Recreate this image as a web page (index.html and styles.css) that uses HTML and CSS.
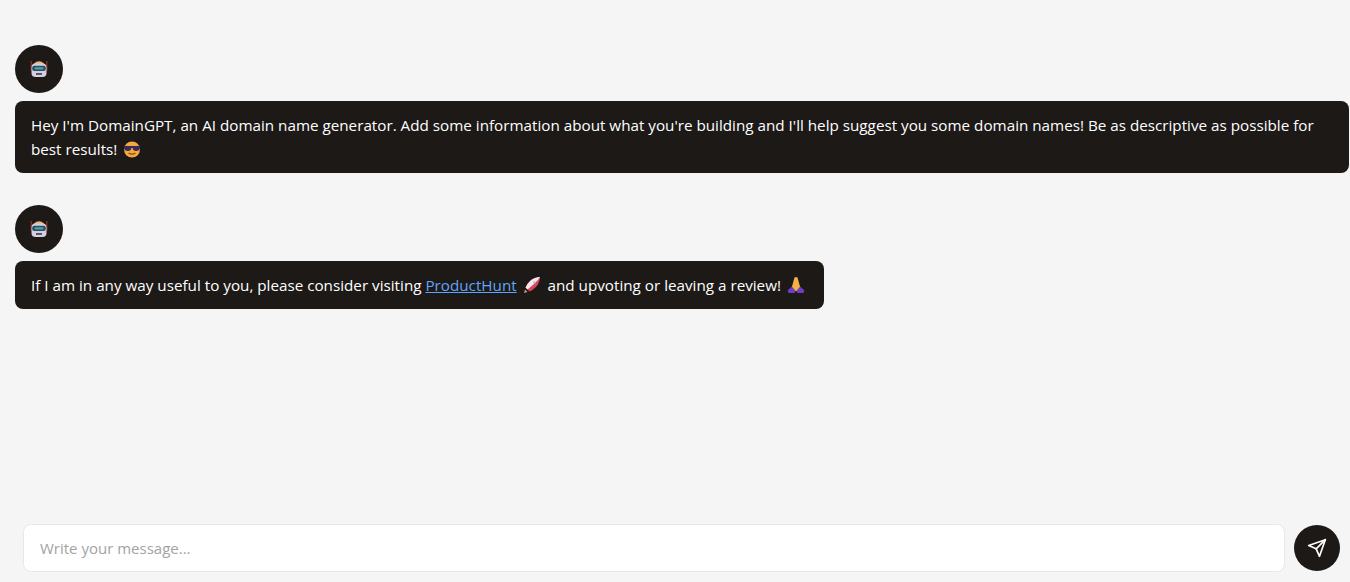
FILE: index.html
```html
<!DOCTYPE html>
<html lang="en">
  <head>
    <meta charset="UTF-8" />
    <meta name="viewport" content="width=device-width, initial-scale=1.0" />
    <title>DomainGPT</title>
    <link rel="stylesheet" href="styles.css">
  </head>
  <body>
    <main class="chat">
      <div class="message">
        <div class="avatar">
          <svg class="robot" viewBox="0 0 18 18" width="18" height="18" aria-hidden="true">
            <path d="M0.5 1 L2 1 L2.5 11 L0.5 11 Z M16 1 L17.5 1 L17.5 11 L15.5 11 Z" fill="#7a2c22" />
            <path d="M4 3.5 Q9 -1 14 3.5 L14 5 L4 5 Z" fill="#f0b27a" />
            <rect x="1.5" y="3.5" width="15" height="13.5" rx="4" fill="#d6cede" />
            <rect x="2.2" y="5.8" width="13.6" height="5.2" rx="2.2" fill="#27505f" />
            <rect x="4.5" y="7.2" width="9" height="2.2" rx="1" fill="#4f9fb2" />
            <rect x="6" y="13.2" width="6" height="1.5" fill="#33303a" />
          </svg>
        </div>
        <div class="bubble">
          Hey I'm DomainGPT, an AI domain name generator. Add some information about what you're building and I'll help suggest you some domain names! Be as descriptive as possible for best results!
          <svg class="emoji" viewBox="0 0 18 18" width="18" height="18" aria-hidden="true">
            <circle cx="9" cy="9.5" r="8" fill="#f4a93c" />
            <path d="M0.8 6 H17.2 V7.5 Q16.5 11 13 11 Q10 11 9.6 8 H8.4 Q8 11 5 11 Q1.5 11 0.8 7.5 Z" fill="#3b2a5c" />
            <path d="M5.5 13 Q9 15.2 12.5 13" fill="none" stroke="#8a4a12" stroke-width="1.1" />
          </svg>
        </div>
      </div>

      <div class="message">
        <div class="avatar">
          <svg class="robot" viewBox="0 0 18 18" width="18" height="18" aria-hidden="true">
            <path d="M0.5 1 L2 1 L2.5 11 L0.5 11 Z M16 1 L17.5 1 L17.5 11 L15.5 11 Z" fill="#7a2c22" />
            <path d="M4 3.5 Q9 -1 14 3.5 L14 5 L4 5 Z" fill="#f0b27a" />
            <rect x="1.5" y="3.5" width="15" height="13.5" rx="4" fill="#d6cede" />
            <rect x="2.2" y="5.8" width="13.6" height="5.2" rx="2.2" fill="#27505f" />
            <rect x="4.5" y="7.2" width="9" height="2.2" rx="1" fill="#4f9fb2" />
            <rect x="6" y="13.2" width="6" height="1.5" fill="#33303a" />
          </svg>
        </div>
        <div class="bubble">
          If I am in any way useful to you, please consider visiting
          <a href="#">ProductHunt</a>
          <svg class="emoji" viewBox="0 0 18 18" width="18" height="18" aria-hidden="true">
            <path d="M1 17 L2 13.5 L4.5 16 Z" fill="#c9a07a" />
            <path d="M2.5 11.5 Q6 4 12 2 Q15.5 0.8 17 1 Q17.2 2.5 16 6 Q14 12 6.5 15.5 Z" fill="#d8455f" />
            <path d="M2.5 11.5 Q6 4 12 2 Q15.5 0.8 17 1 Q14 6 4.5 13.5 Z" fill="#f3e9ef" />
            <circle cx="11.5" cy="6.5" r="1.2" fill="#c9a9c9" />
          </svg>
          and upvoting or leaving a review!
          <svg class="emoji" viewBox="0 0 18 18" width="18" height="18" aria-hidden="true">
            <path d="M6 9.5 L1 14 Q0 16.5 2.5 17 H7.5 L9 14 L10.5 17 H15.5 Q18 16.5 17 14 L12 9.5 Z" fill="#6d3fc0" />
            <path d="M7.5 1.5 Q9 0.5 10.5 1.5 L13 10.5 L9 15.5 L5 10.5 Z" fill="#f4b042" />
          </svg>
        </div>
      </div>
    </main>

    <form class="composer">
      <input class="composer-input" type="text" placeholder="Write your message..." />
      <button class="send-btn" type="submit" aria-label="Send">
        <svg viewBox="0 0 24 24" width="20" height="20" fill="none" stroke="#fff" stroke-width="2" stroke-linejoin="round" stroke-linecap="round" aria-hidden="true">
          <path d="M22 2 15 22 11 13 2 9Z" />
          <path d="M22 2 11 13" />
        </svg>
      </button>
    </form>
  </body>
</html>
```

FILE: styles.css
```css
* {
  box-sizing: border-box;
}

html,
body {
  height: 100%;
}

body {
  margin: 0;
  display: flex;
  flex-direction: column;
  justify-content: space-between;
  background-color: #f5f5f5;
  color: #fff;
  font-family: "Open Sans", "Noto Sans", sans-serif;
  font-size: 15.23px;
  line-height: 24px;
  overflow: hidden;
}

.chat {
  display: flex;
  flex-direction: column;
  align-items: flex-start;
  gap: 32px;
  padding: 45px 1px 0 15px;
}

.message {
  display: flex;
  flex-direction: column;
  align-items: flex-start;
  gap: 8px;
}

.avatar {
  display: flex;
  align-items: center;
  justify-content: center;
  width: 48px;
  height: 48px;
  border-radius: 50%;
  background-color: #1c1917;
}

.bubble {
  padding: 12px 16px;
  border-radius: 8px;
  background-color: #1c1917;
}

.bubble a {
  color: #60a5fa;
}

.emoji {
  vertical-align: -3px;
  margin: 0 3px 0 2px;
}

.composer {
  display: flex;
  align-items: center;
  gap: 9px;
  padding: 0 10px 10px 23px;
}

.composer-input {
  flex: 1;
  height: 48px;
  padding: 0 16px;
  border: 1px solid #e8e8e8;
  border-radius: 8px;
  background-color: #fff;
  font-family: inherit;
  font-size: 15px;
  color: #1c1917;
}

.composer-input::placeholder {
  color: #a3a3a3;
}

.send-btn {
  display: flex;
  align-items: center;
  justify-content: center;
  width: 46px;
  height: 46px;
  padding: 0;
  border: none;
  border-radius: 50%;
  background-color: #1c1917;
  cursor: pointer;
}
```
